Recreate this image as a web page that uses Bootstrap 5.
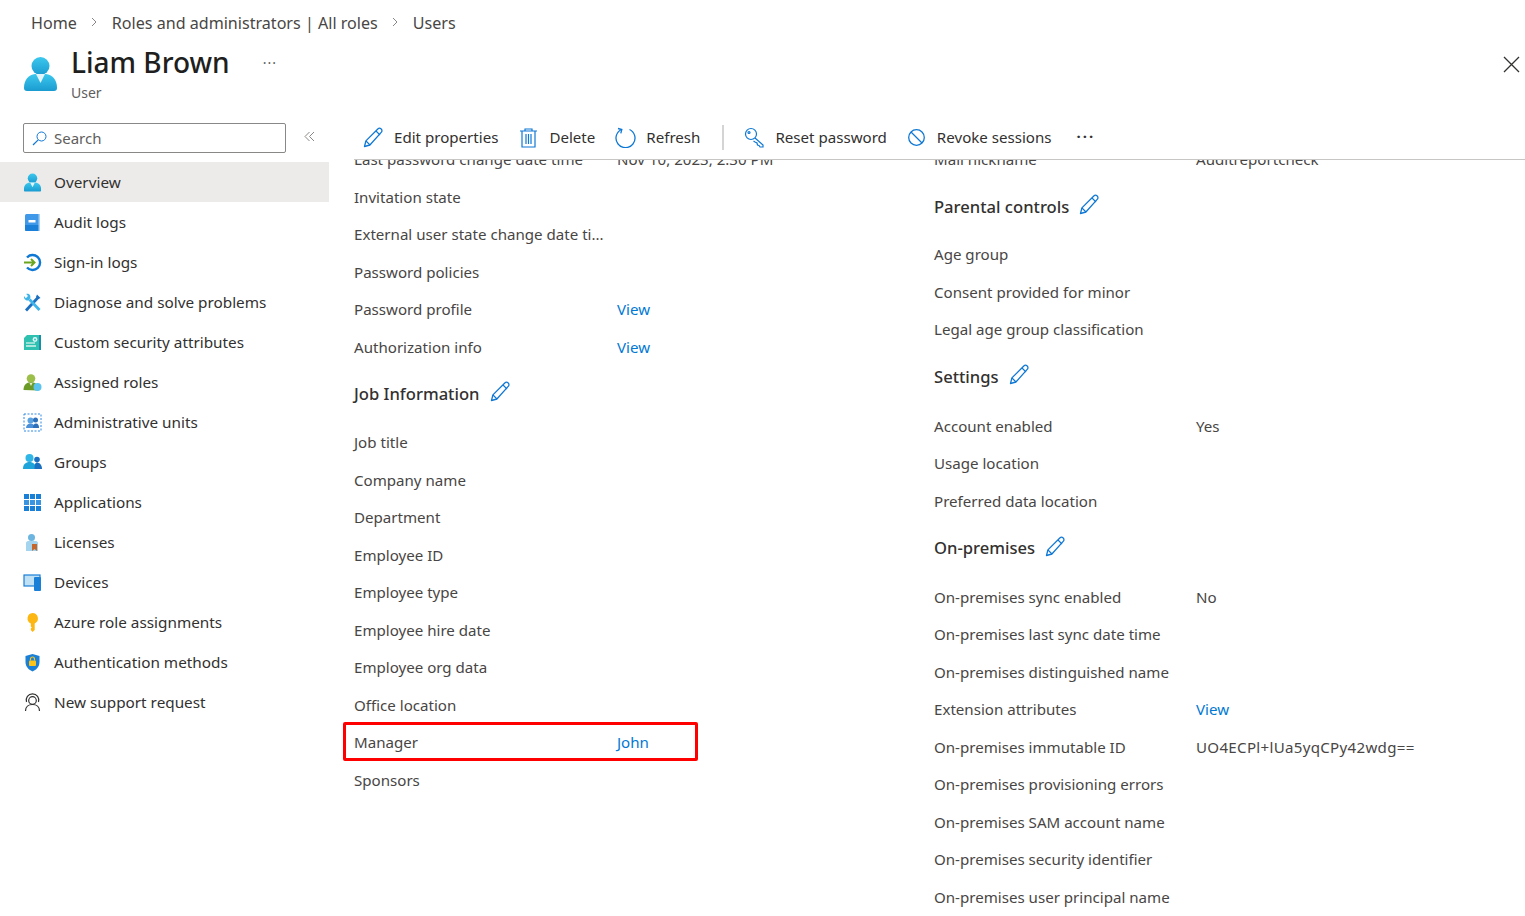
<!DOCTYPE html>
<html lang="en">
<head>
  <meta charset="UTF-8">
  <meta name="viewport" content="width=device-width, initial-scale=1.0">
  <title>Liam Brown - User</title>
  <link href="https://cdn.jsdelivr.net/npm/bootstrap@5.3.0/dist/css/bootstrap.min.css" rel="stylesheet">
  <style>
    html, body { height: 100%; overflow: hidden; }
    body { font-family: "Noto Sans", "Open Sans", sans-serif; font-size: 15px; color: #323130; background: #fff; }
    .crumbs { height: 45px; padding-left: 31px; padding-top: 2px; font-size: 16.1px; color: #484644; gap: 14.5px; }
    .crumbs svg { width: 6px; height: 10px; margin-top: -3px; }
    .blade-head { height: 65px; padding-left: 24px; }
    .blade-head .person { width: 33px; height: 36px; margin-top: 11px; }
    .blade-titles { margin-left: 14px; }
    .blade-name { font-size: 28px; line-height: 34px; font-weight: 500; color: #201f1e; }
    .blade-sub { font-size: 14px; line-height: 20px; color: #605e5c; margin-top: 4px; }
    .head-more { margin-left: 33px; margin-top: 8px; color: #605e5c; letter-spacing: 1px; font-size: 14px; line-height: 20px; }
    .close-x { position: absolute; top: 56px; right: 5px; width: 17px; height: 17px; }
    .blade-body { height: 806px; }
    .side { width: 329px; flex: none; padding-top: 13px; }
    .search-row { padding-left: 23px; height: 39px; }
    .search-box { width: 263px; height: 30px; border: 1px solid #8a8886; border-radius: 2px; padding-left: 8px; gap: 7px; color: #605e5c; font-size: 15px; }
    .search-box svg { width: 15px; height: 15px; }
    .collapse-btn { margin-left: 18px; width: 11px; height: 11px; }
    .side-item { height: 40px; padding-left: 23px; padding-top: 1px; gap: 12px; color: #323130; font-size: 15.3px; }
    .side-item svg { width: 19px; height: 19px; flex: none; }
    .side-item.on { background: #edebe9; }
    .main { flex: 1; min-width: 0; }
    .tools { height: 42px; margin-top: 8px; border-bottom: 1px solid #c8c6c4; margin-left: 25px; padding-left: 9px; padding-bottom: 2px; color: #323130; font-size: 15.1px; }
    .tool { gap: 10px; margin-right: 20px; }
    .tool.tight { margin-right: 19px; }
    .tool svg { width: 21px; height: 21px; flex: none; }
    .tool-sep { width: 2px; height: 25px; background: #d6d4d2; margin: 0 20px 0 2px; }
    .tool-dots { font-size: 15px; letter-spacing: 2px; font-weight: 700; margin-top: -3px; margin-left: 5px; }
    .scroll-pane { height: 756px; overflow: hidden; }
    .scroll-inner { margin-top: -19px; padding-left: 16px; }
    .prop-col { width: 580px; flex: none; padding-left: 9px; color: #484644; font-size: 15.1px; }
    .prop { height: 37.5px; }
    .prop-key { width: 263px; flex: none; white-space: nowrap; }
    .right-col .prop-key { width: 262px; }
    .prop-link { color: #0078d4; text-decoration: none; }
    .wide-val { letter-spacing: .3px; }
    .sect { height: 58px; gap: 10px; font-size: 16.6px; font-weight: 500; color: #323130; padding-bottom: 2px; }
    .sect svg { width: 21px; height: 21px; margin-top: -5px; }
    .sect-a { height: 57.5px; padding-bottom: 0; }
    .sect-b { height: 59px; }
    .sect-c { height: 58.5px; padding-bottom: 1px; }
    .red-mark { position: absolute; left: -11px; top: -2px; width: 355px; height: 39px; border: 3.5px solid #f00; border-radius: 2px; }
  </style>
</head>
<body>
  <svg width="0" height="0" class="position-absolute">
    <defs>
      <linearGradient id="cyanFade" x1="0" y1="0" x2="0" y2="1"><stop offset="0" stop-color="#3cc8ee"/><stop offset="1" stop-color="#1a9bd0"/></linearGradient>
      <symbol id="pencil" viewBox="0 0 21 21">
        <path d="M1.500 19.500l1.400-5.600L14.800 2c1-1 2.400-1 3.400 0s1 2.400 0 3.400L6.900 18z" fill="#fff" stroke="#0f78d4" stroke-width="1.300" stroke-linejoin="round"/>
        <path d="M13 4l4 4M3 14l4 4" fill="none" stroke="#0f78d4" stroke-width="1.100"/>
      </symbol>
      <symbol id="person" viewBox="0 0 33 36">
        <circle cx="16.500" cy="10" r="9" fill="url(#cyanFade)"/>
        <path d="M0 32c0-9 5-13 11-14h11c6 1 11 5 11 14 0 2-1 3-3 3H3c-2 0-3-1-3-3z" fill="url(#cyanFade)"/>
        <path d="M12 18h9l-4.500 9z" fill="#e3f5fb"/>
      </symbol>
    </defs>
  </svg>

  <nav class="crumbs d-flex align-items-center">
    <span>Home</span>
    <svg viewBox="0 0 6 10"><path d="M1 1l4 4-4 4" fill="none" stroke="#8a8886"/></svg>
    <span>Roles and administrators | All roles</span>
    <svg viewBox="0 0 6 10"><path d="M1 1l4 4-4 4" fill="none" stroke="#8a8886"/></svg>
    <span>Users</span>
  </nav>

  <header class="blade-head d-flex align-items-start">
    <svg class="person"><use href="#person"/></svg>
    <div class="blade-titles">
      <div class="blade-name">Liam Brown</div>
      <div class="blade-sub">User</div>
    </div>
    <div class="head-more">···</div>
  </header>
  <svg class="close-x" viewBox="0 0 17 17"><path d="M1 1l15 15M16 1L1 16" stroke="#323130" stroke-width="1.300"/></svg>

  <div class="blade-body d-flex">
    <aside class="side">
      <div class="search-row d-flex align-items-start">
        <div class="search-box d-flex align-items-center">
          <svg viewBox="0 0 15 15"><circle cx="9.500" cy="5.500" r="4.500" fill="none" stroke="#0f78d4"/><path d="M6.200 8.800L1 14" stroke="#0f78d4" stroke-width="1.200"/></svg>
          <span>Search</span>
        </div>
        <svg class="collapse-btn mt-2" viewBox="0 0 11 11"><path d="M5.500 1L1 5.500 5.500 10M10 1L5.500 5.500 10 10" fill="none" stroke="#8a8886"/></svg>
      </div>

      <div class="side-item on d-flex align-items-center"><svg viewBox="0 0 33 36"><use href="#person"/></svg><span>Overview</span></div>
      <div class="side-item d-flex align-items-center">
        <svg viewBox="0 0 19 19"><rect x="2" y="1" width="15" height="17" rx="1.500" fill="#3f98e8"/><path d="M2 12h15v4.500a1.500 1.500 0 0 1-1.500 1.500h-12A1.500 1.500 0 0 1 2 16.500z" fill="#1a7fd6"/><rect x="15.500" y="1" width="1.500" height="17" fill="#a6d1f2"/><rect x="5.500" y="7" width="7" height="2.500" fill="#fff"/></svg>
        <span>Audit logs</span></div>
      <div class="side-item d-flex align-items-center">
        <svg viewBox="0 0 19 19"><path d="M4 4.500a7.500 7.500 0 1 1 0 10" fill="none" stroke="#0f78d4" stroke-width="2.400"/><path d="M1 9.500h10M8 6l3.500 3.500L8 13" fill="none" stroke="#6aa51f" stroke-width="2"/></svg>
        <span>Sign-in logs</span></div>
      <div class="side-item d-flex align-items-center">
        <svg viewBox="0 0 19 19"><path d="M3 17.500L15.500 4" stroke="#1a6fc0" stroke-width="2.800"/><path d="M14 1.500l3.500 3.500-2.500 1-2-2z" fill="#1a6fc0"/><path d="M16.500 17L6.500 6.500" stroke="#3fb4ea" stroke-width="2.800"/><path d="M1 3l1.800 2.200L5 3 3.200 1c2.800-.8 5 1.500 4 4.500L5.500 7.500C3 8 .5 6 1 3z" fill="#3fb4ea"/></svg>
        <span>Diagnose and solve problems</span></div>
      <div class="side-item d-flex align-items-center">
        <svg viewBox="0 0 19 19"><path d="M1 5l3-3h14v15H1z" fill="#2fc1b0"/><rect x="16" y="2" width="2" height="15" fill="#1a8ea8"/><path d="M3 10h9" stroke="#c8f0ea" stroke-width="1.400"/><path d="M3 13h10" stroke="#fff" stroke-width="1.200"/><circle cx="12" cy="6.500" r="2.400" fill="#e3f5fb"/><circle cx="12" cy="6.500" r=".9" fill="#2fc1b0"/></svg>
        <span>Custom security attributes</span></div>
      <div class="side-item d-flex align-items-center">
        <svg viewBox="0 0 19 19"><circle cx="8" cy="5.500" r="4.300" fill="#9cbf4a"/><path d="M0.500 17c0-5 3-7 5-7.500h5c2 .5 4 2 5 4v4z" fill="#6b9a26"/><path d="M6.500 10h3L8 13z" fill="#e8f1d6"/><circle cx="14.500" cy="14" r="4" fill="#5cc3ee"/></svg>
        <span>Assigned roles</span></div>
      <div class="side-item d-flex align-items-center">
        <svg viewBox="0 0 19 19"><rect x="1" y="1" width="17" height="17" fill="#fff" stroke="#2a8ae0" stroke-dasharray="2 1.500"/><circle cx="7.500" cy="7.500" r="3" fill="#5aa3e0"/><circle cx="12.500" cy="7" r="2.500" fill="#2d6fb8"/><path d="M3 15c0-3 2-4.500 4.500-4.500S12 12 12 15z" fill="#4a90d9"/><path d="M10 15c0-3 1-4.500 3-4.500s3 1.500 3 4.500z" fill="#2d6fb8"/></svg>
        <span>Administrative units</span></div>
      <div class="side-item d-flex align-items-center">
        <svg viewBox="0 0 19 19"><circle cx="6.500" cy="5" r="4" fill="#2fb5e6"/><path d="M0 16c0-5 3-7 6.500-7s6.500 2 6.500 7z" fill="#1ea4d8"/><circle cx="14" cy="6.500" r="2.800" fill="#1a6fc0"/><path d="M11.500 16c0-4 .5-6.500 2.500-6.500s5 2 5 6.500z" fill="#1a6fc0"/></svg>
        <span>Groups</span></div>
      <div class="side-item d-flex align-items-center">
        <svg viewBox="0 0 19 19" fill="#1a7fd6"><rect x="1" y="1" width="5" height="5"/><rect x="7" y="1" width="5" height="5"/><rect x="13" y="1" width="5" height="5"/><rect x="1" y="7" width="5" height="5" fill="#3a94e0"/><rect x="7" y="7" width="5" height="5" fill="#3a94e0"/><rect x="13" y="7" width="5" height="5" fill="#3a94e0"/><rect x="1" y="13" width="5" height="5"/><rect x="7" y="13" width="5" height="5"/><rect x="13" y="13" width="5" height="5"/></svg>
        <span>Applications</span></div>
      <div class="side-item d-flex align-items-center">
        <svg viewBox="0 0 19 19"><circle cx="8.500" cy="4.500" r="3.500" fill="#6bb5e0"/><path d="M3 18V10c0-1 1-2 2-2h8c1 0 2 1 2 2v8z" fill="#a5d4ee"/><path d="M9 18v-7h5v7l-2.500-2z" fill="#c8672b"/></svg>
        <span>Licenses</span></div>
      <div class="side-item d-flex align-items-center">
        <svg viewBox="0 0 19 19"><rect x="1" y="2" width="16" height="11" fill="#bfe0f5" stroke="#1a7fd6" stroke-width="1.200"/><rect x="11" y="4" width="7" height="14" rx="1" fill="#1a7fd6"/></svg>
        <span>Devices</span></div>
      <div class="side-item d-flex align-items-center">
        <svg viewBox="0 0 19 19"><path d="M9.500 0a5.500 5.500 0 0 1 2.200 10.500V17l-2.200 2-1.700-2v-1.500l1-1-1-1v-3A5.500 5.500 0 0 1 9.500 0z" fill="#fcb714"/></svg>
        <span>Azure role assignments</span></div>
      <div class="side-item d-flex align-items-center">
        <svg viewBox="0 0 19 19"><path d="M9.500 1l7 2v6c0 5-3.500 8-7 9.500-3.500-1.500-7-4.500-7-9.500V3z" fill="#1a7fd6"/><rect x="6" y="7.500" width="7" height="5.500" rx="1" fill="#fcc419"/><path d="M7.500 7.500V6a2 2 0 0 1 4 0v1.500" fill="none" stroke="#fcc419" stroke-width="1.200"/></svg>
        <span>Authentication methods</span></div>
      <div class="side-item d-flex align-items-center">
        <svg viewBox="0 0 19 19" fill="none" stroke="#323130" stroke-width="1.200"><circle cx="9.500" cy="7.500" r="3.800"/><path d="M3.500 9a6.300 6.300 0 1 1 12 0"/><path d="M2.500 18c0-4 3-6.500 7-6.500s7 2.500 7 6.500"/></svg>
        <span>New support request</span></div>
    </aside>

    <main class="main">
      <div class="tools d-flex align-items-center">
        <div class="tool d-flex align-items-center"><svg><use href="#pencil"/></svg><span>Edit properties</span></div>
        <div class="tool d-flex align-items-center"><svg viewBox="0 0 21 21" fill="none" stroke="#0f78d4" stroke-width="1.200"><path d="M2 4h17M7 4V2h7v2M4 4v16h13V4M8 7v10M10.500 7v10M13 7v10"/></svg><span>Delete</span></div>
        <div class="tool d-flex align-items-center"><svg viewBox="0 0 21 21" fill="none" stroke="#0f78d4" stroke-width="1.300"><path d="M6.500 2.500a9.500 9.500 0 1 0 8 0"/><path d="M3 1.500l3.800 1-1 3.800"/></svg><span>Refresh</span></div>
        <div class="tool-sep"></div>
        <div class="tool tight d-flex align-items-center"><svg viewBox="0 0 21 21" fill="none" stroke="#0f78d4" stroke-width="1.200"><circle cx="7" cy="7" r="5.500"/><circle cx="5" cy="5.500" r="1"/><path d="M11 11l8 7v2h-3l-1-1.500-1.500-.5-.5-2-2-1-1.500-1"/></svg><span>Reset password</span></div>
        <div class="tool d-flex align-items-center"><svg viewBox="0 0 21 21" fill="none" stroke="#0f78d4" stroke-width="1.300"><circle cx="10.500" cy="10.500" r="7.800"/><path d="M5 5l11 11"/></svg><span>Revoke sessions</span></div>
        <div class="tool-dots">···</div>
      </div>

      <div class="scroll-pane">
        <div class="scroll-inner d-flex">
          <section class="prop-col">
            <div class="prop d-flex align-items-center"><span class="prop-key">Last password change date time</span><span>Nov 10, 2023, 2:30 PM</span></div>
            <div class="prop d-flex align-items-center"><span class="prop-key">Invitation state</span></div>
            <div class="prop d-flex align-items-center"><span class="prop-key">External user state change date ti...</span></div>
            <div class="prop d-flex align-items-center"><span class="prop-key">Password policies</span></div>
            <div class="prop d-flex align-items-center"><span class="prop-key">Password profile</span><a class="prop-link" href="#">View</a></div>
            <div class="prop d-flex align-items-center"><span class="prop-key">Authorization info</span><a class="prop-link" href="#">View</a></div>
            <div class="sect d-flex align-items-center"><span>Job Information</span><svg><use href="#pencil"/></svg></div>
            <div class="prop d-flex align-items-center"><span class="prop-key">Job title</span></div>
            <div class="prop d-flex align-items-center"><span class="prop-key">Company name</span></div>
            <div class="prop d-flex align-items-center"><span class="prop-key">Department</span></div>
            <div class="prop d-flex align-items-center"><span class="prop-key">Employee ID</span></div>
            <div class="prop d-flex align-items-center"><span class="prop-key">Employee type</span></div>
            <div class="prop d-flex align-items-center"><span class="prop-key">Employee hire date</span></div>
            <div class="prop d-flex align-items-center"><span class="prop-key">Employee org data</span></div>
            <div class="prop d-flex align-items-center"><span class="prop-key">Office location</span></div>
            <div class="prop d-flex align-items-center position-relative"><span class="prop-key">Manager</span><a class="prop-link" href="#">John</a><span class="red-mark"></span></div>
            <div class="prop d-flex align-items-center"><span class="prop-key">Sponsors</span></div>
          </section>
          <section class="prop-col right-col">
            <div class="prop d-flex align-items-center"><span class="prop-key">Mail nickname</span><span>Auditreportcheck</span></div>
            <div class="sect sect-a d-flex align-items-center"><span>Parental controls</span><svg><use href="#pencil"/></svg></div>
            <div class="prop d-flex align-items-center"><span class="prop-key">Age group</span></div>
            <div class="prop d-flex align-items-center"><span class="prop-key">Consent provided for minor</span></div>
            <div class="prop d-flex align-items-center"><span class="prop-key">Legal age group classification</span></div>
            <div class="sect sect-b d-flex align-items-center"><span>Settings</span><svg><use href="#pencil"/></svg></div>
            <div class="prop d-flex align-items-center"><span class="prop-key">Account enabled</span><span>Yes</span></div>
            <div class="prop d-flex align-items-center"><span class="prop-key">Usage location</span></div>
            <div class="prop d-flex align-items-center"><span class="prop-key">Preferred data location</span></div>
            <div class="sect sect-c d-flex align-items-center"><span>On-premises</span><svg><use href="#pencil"/></svg></div>
            <div class="prop d-flex align-items-center"><span class="prop-key">On-premises sync enabled</span><span>No</span></div>
            <div class="prop d-flex align-items-center"><span class="prop-key">On-premises last sync date time</span></div>
            <div class="prop d-flex align-items-center"><span class="prop-key">On-premises distinguished name</span></div>
            <div class="prop d-flex align-items-center"><span class="prop-key">Extension attributes</span><a class="prop-link" href="#">View</a></div>
            <div class="prop d-flex align-items-center"><span class="prop-key">On-premises immutable ID</span><span class="wide-val">UO4ECPl+lUa5yqCPy42wdg==</span></div>
            <div class="prop d-flex align-items-center"><span class="prop-key">On-premises provisioning errors</span></div>
            <div class="prop d-flex align-items-center"><span class="prop-key">On-premises SAM account name</span></div>
            <div class="prop d-flex align-items-center"><span class="prop-key">On-premises security identifier</span></div>
            <div class="prop d-flex align-items-center"><span class="prop-key">On-premises user principal name</span></div>
          </section>
        </div>
      </div>
    </main>
  </div>
  <script src="https://cdn.jsdelivr.net/npm/bootstrap@5.3.0/dist/js/bootstrap.bundle.min.js"></script>
</body>
</html>
